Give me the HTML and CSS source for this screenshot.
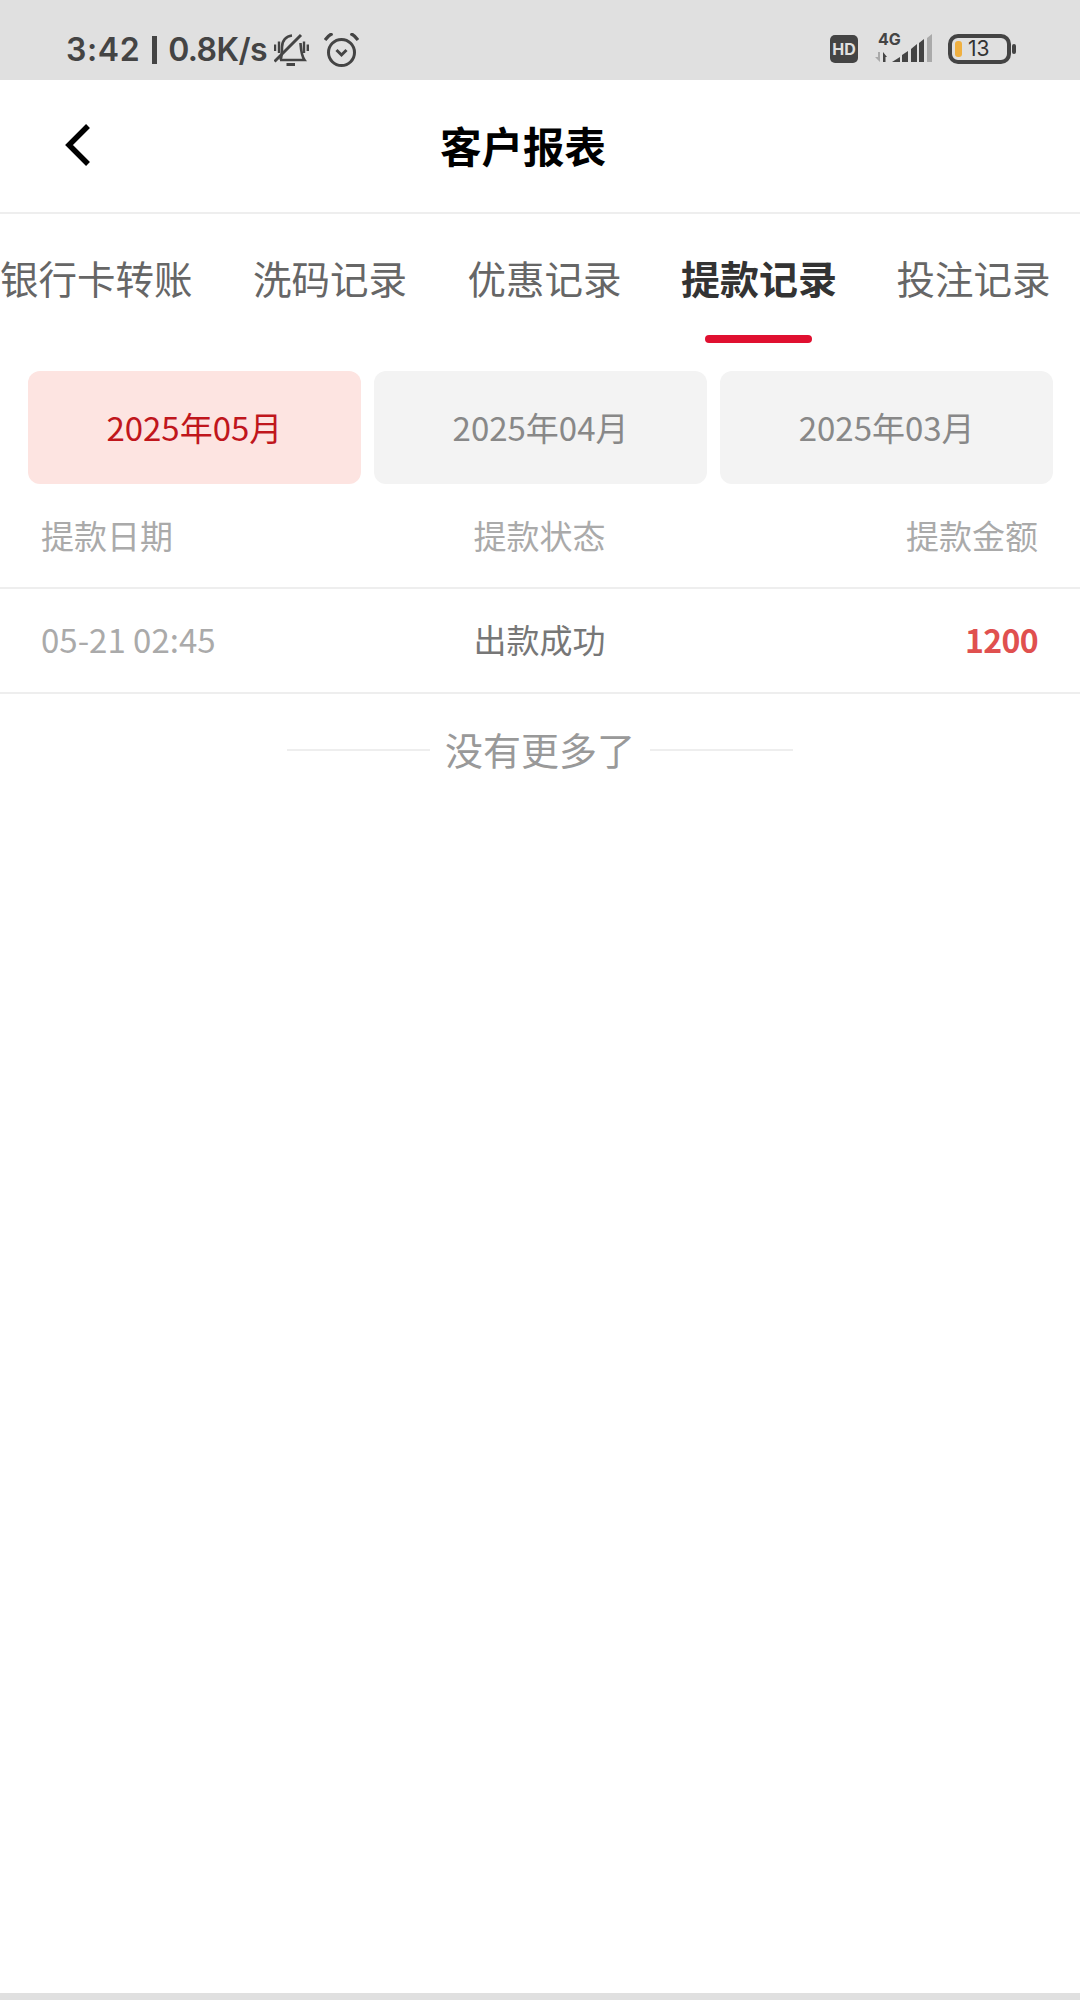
FILE: index.html
```html
<!DOCTYPE html>
<html lang="zh-CN">

<head>
    <meta charset="UTF-8">
    <meta name="viewport" content="width=device-width, initial-scale=1.0">
    <title>客户报表</title>
    <link rel="stylesheet" href="styles.css">
</head>

<body>
    <div class="status-bar">
        <div class="status-text">
            <span class="status-time">3:42</span>
            <span class="status-sep"></span>
            <span class="status-speed">0.8K/s</span>
        </div>
        <svg class="bell-icon" width="35" height="34" viewBox="0 0 35 34" fill="none" stroke="#444" stroke-width="2.600">
            <path d="M6.500 27 C8 23 8 19 8 14 C8 8 12 3 18 2.500" />
            <path d="M26.500 10 C27 16 27 22 30.500 27 H6" />
            <path d="M12.500 31.500 H21" stroke-width="3" />
            <path d="M0.500 28.500 L27 2" stroke-width="3" />
            <path d="M1 11.500 V18 M5 8.500 V20 M30 8.500 V20 M33.800 11.500 V18" stroke-width="2.400" />
        </svg>
        <svg class="alarm-icon" width="35" height="34" viewBox="0 0 35 34" fill="none" stroke="#444" stroke-width="3">
            <circle cx="17.500" cy="19.500" r="13" />
            <path d="M12.500 17 L17.500 22 L22.500 17" />
            <path d="M1 7 C3 4 5 2 8.500 0.500 M34 7 C32 4 30 2 26.500 0.500" stroke-width="3.200" />
        </svg>
        <div class="status-right">
            <span class="hd-badge">HD</span>
            <div class="signal">
                <span class="signal-type">4G</span>
                <svg width="57" height="29" viewBox="0 0 57 29">
                    <path d="M5 18 V28 L0 23 H3 V18 Z" fill="#aaa" />
                    <path d="M8 28 V18 L12 23 H10.500 V28 Z" fill="#444" />
                    <path d="M17 28 L25 23 V28 Z" fill="#444" />
                    <path d="M27 28 V21 L33 17 V28 Z" fill="#444" />
                    <path d="M36 28 V15 L42 10 V28 Z" fill="#444" />
                    <path d="M44 28 V9 L49 5 V28 Z" fill="#444" />
                    <path d="M52 28 V4 L57 0 V28 Z" fill="#aaa" />
                </svg>
            </div>
            <div class="battery">
                <span class="battery-level"></span>
                <span class="battery-text">13</span>
            </div>
            <span class="battery-nub"></span>
        </div>
    </div>

    <header class="nav">
        <svg class="back-icon" width="28" height="44" viewBox="0 0 28 44" fill="none" stroke="#000" stroke-width="5.500">
            <path d="M24 3 L5 22 L24 41" />
        </svg>
        <h1 class="nav-title">客户报表</h1>
    </header>

    <div class="tabs">
        <div class="tab">银行卡转账</div>
        <div class="tab">洗码记录</div>
        <div class="tab">优惠记录</div>
        <div class="tab active">提款记录</div>
        <div class="tab">投注记录</div>
    </div>

    <div class="months">
        <div class="month active">2025年05月</div>
        <div class="month">2025年04月</div>
        <div class="month">2025年03月</div>
    </div>

    <div class="table-head">
        <span>提款日期</span>
        <span>提款状态</span>
        <span class="cell-right">提款金额</span>
    </div>
    <div class="table-row">
        <span>05-21 02:45</span>
        <span class="row-status">出款成功</span>
        <span class="cell-right row-amount">1200</span>
    </div>

    <div class="no-more">
        <span class="no-more-line"></span>
        <span>没有更多了</span>
        <span class="no-more-line"></span>
    </div>

    <div class="bottom-bar"></div>
</body>

</html>
```

FILE: styles.css
```css
body {
    margin: 0;
    min-height: 100vh;
    display: flex;
    flex-direction: column;
    background-color: #fff;
    font-family: "Noto Sans CJK SC", "Noto Sans", sans-serif;
    overflow: hidden;
}

.status-bar {
    height: 80px;
    background-color: #e0e0e0;
    display: flex;
    align-items: flex-start;
    padding-left: 66px;
    color: #444;
    box-sizing: border-box;
}

.status-text {
    display: flex;
    align-items: center;
    width: 208px;
    height: 34px;
    margin-top: 33px;
    font-family: Inter, sans-serif;
    font-size: 32px;
    font-weight: 600;
    line-height: 34px;
    white-space: nowrap;
}

.status-time {
    letter-spacing: 0.600px;
}

.status-sep {
    width: 5px;
    height: 28px;
    margin: 0 11px 0 12px;
    background-color: #444;
}

.status-speed {
    letter-spacing: -0.600px;
}

.bell-icon {
    margin-top: 33px;
}

.alarm-icon {
    margin-top: 33px;
    margin-left: 15px;
}

.status-right {
    display: flex;
    align-items: flex-start;
    margin-left: auto;
    margin-right: 64px;
}

.hd-badge {
    width: 28px;
    height: 28px;
    margin-top: 35px;
    border-radius: 5px;
    background-color: #444;
    color: #e0e0e0;
    font-family: Inter, sans-serif;
    font-size: 16px;
    font-weight: 700;
    line-height: 28px;
    text-align: center;
}

.signal {
    position: relative;
    width: 57px;
    height: 29px;
    margin-top: 34px;
    margin-left: 17px;
}

.signal svg {
    display: block;
}

.signal-type {
    position: absolute;
    left: 3px;
    top: -4px;
    font-family: Inter, sans-serif;
    font-size: 16px;
    font-weight: 700;
    line-height: 18px;
}

.battery {
    width: 63px;
    height: 30px;
    margin-top: 34px;
    margin-left: 16px;
    border: 4px solid #444;
    border-radius: 10px;
    box-sizing: border-box;
    display: flex;
    align-items: center;
    padding-left: 3px;
}

.battery-level {
    width: 7px;
    height: 16px;
    border-radius: 3px;
    background-color: #f0b040;
}

.battery-text {
    margin-left: 6px;
    font-family: Inter, sans-serif;
    font-size: 21px;
    line-height: 22px;
    color: #333;
}

.battery-nub {
    width: 4px;
    height: 10px;
    margin-top: 44px;
    margin-left: 1px;
    border-radius: 2px;
    background-color: #444;
}

.nav {
    height: 134px;
    display: flex;
    align-items: center;
    padding-left: 64px;
    box-sizing: border-box;
    border-bottom: 2px solid #eee;
}

.back-icon {
    margin-top: -2px;
}

.nav-title {
    flex: 1;
    margin: 0 0 2px;
    padding-right: 126px;
    text-align: center;
    font-size: 41.500px;
    font-weight: 700;
    line-height: 56px;
    color: #000;
}

.tabs {
    display: flex;
    gap: 60.500px;
    padding: 38px 0 0;
    height: 119px;
    overflow: hidden;
}

.tab {
    position: relative;
    font-size: 38.500px;
    line-height: 50px;
    color: #666;
    white-space: nowrap;
}

.tab.active {
    margin: 0 -1px;
    color: #333;
    font-size: 39px;
    font-weight: 700;
}

.tab.active::after {
    content: "";
    position: absolute;
    left: 24px;
    top: 83px;
    width: 107px;
    height: 8px;
    border-radius: 4px;
    background-color: #e01030;
}

.months {
    display: flex;
    gap: 13.500px;
    padding: 0 27px 0 28px;
}

.month {
    flex: 1;
    height: 113px;
    border-radius: 12px;
    background-color: #f3f3f3;
    color: #888;
    font-size: 33px;
    line-height: 113px;
    text-align: center;
}

.month.active {
    background-color: #fde4e1;
    color: #c0161c;
}

.table-head,
.table-row {
    display: grid;
    grid-template-columns: 1fr auto 1fr;
    align-items: center;
    height: 105px;
    padding: 0 42px 0 41px;
    box-sizing: border-box;
    border-bottom: 2px solid #eee;
    font-size: 33px;
    color: #aaa;
}

.table-head {
    padding-bottom: 1px;
}

.table-row {
    padding-bottom: 4px;
}

.cell-right {
    text-align: right;
}

.row-status {
    color: #777;
}

.row-amount {
    color: #e0504f;
    font-size: 32px;
    font-weight: 700;
    letter-spacing: -0.600px;
}

.no-more {
    display: flex;
    justify-content: center;
    align-items: center;
    gap: 15px;
    margin-top: 30px;
    font-size: 38px;
    line-height: 50px;
    color: #999;
}

.no-more-line {
    width: 143px;
    height: 2px;
    margin-top: 2px;
    background-color: #eee;
}

.bottom-bar {
    height: 7px;
    margin-top: auto;
    background-color: #e0e0e0;
}
```
